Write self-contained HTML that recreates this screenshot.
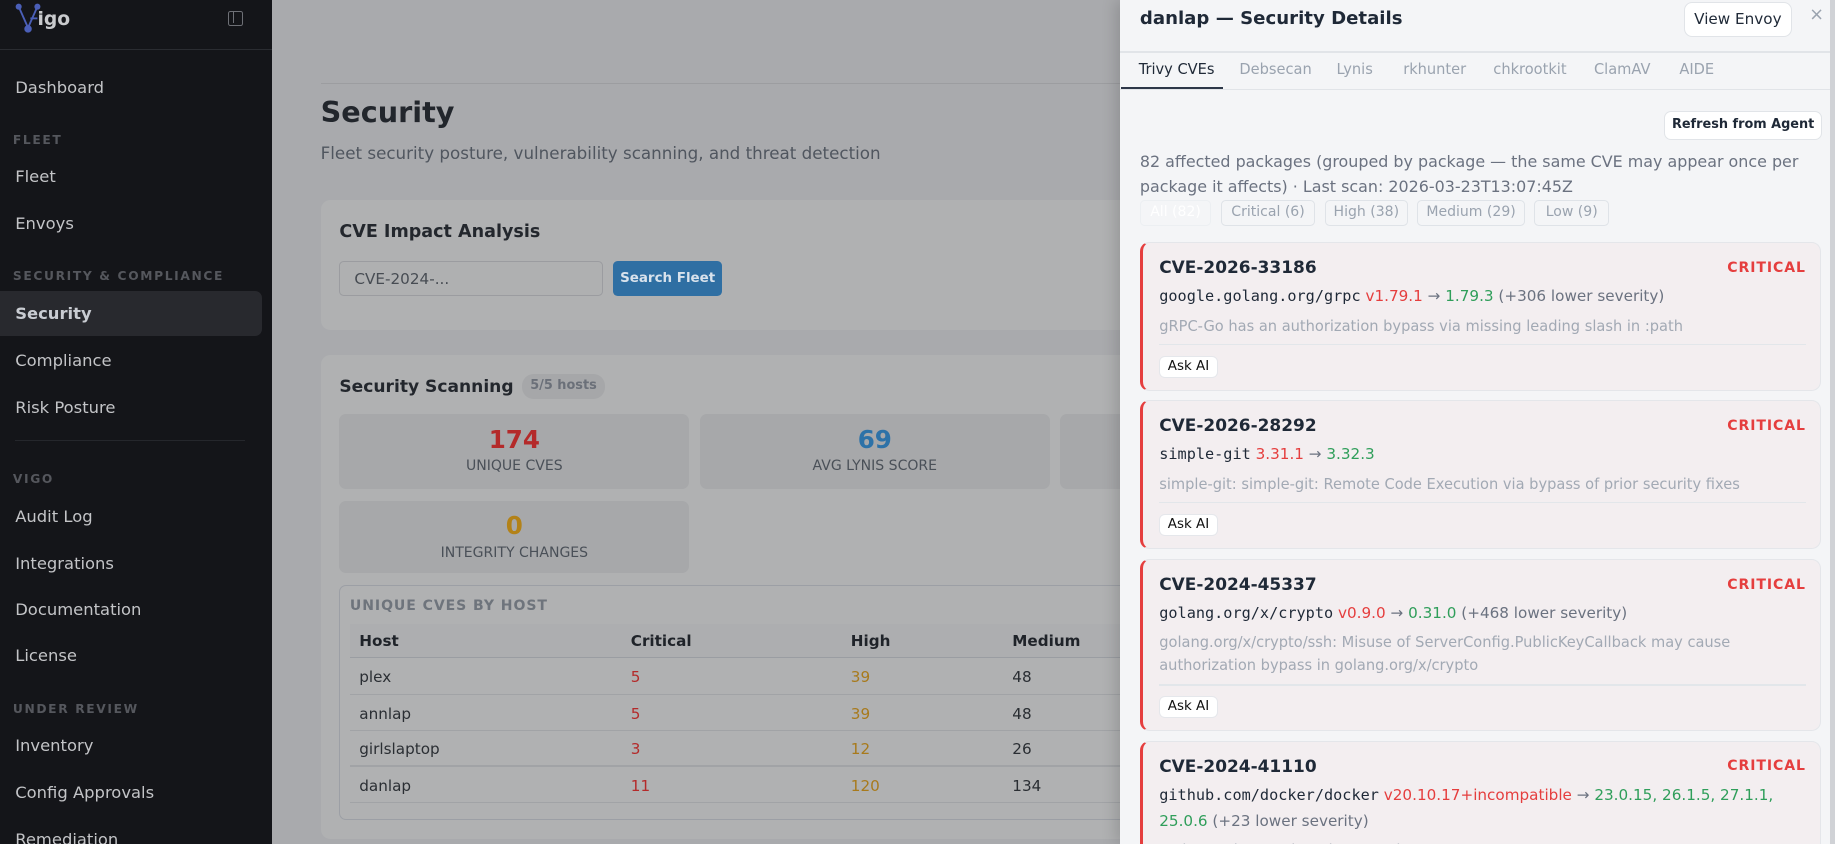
<!DOCTYPE html>
<html><head><meta charset="utf-8"><style>
*{box-sizing:border-box;margin:0;padding:0}
html,body{width:1835px;height:844px;overflow:hidden}
body{font-family:"DejaVu Sans","Liberation Sans",sans-serif;background:#a9aaad;position:relative}
#w{position:absolute;left:0;top:0;width:1568px;height:721px;zoom:1.1703;overflow:hidden}
.sb{position:absolute;left:0;top:0;width:232px;height:721px;background:#141519;color:#c3c4c7}
.sb .it{position:absolute;left:13px;font-size:14px}
.sb .sec{position:absolute;left:11px;font-size:10.5px;font-weight:bold;letter-spacing:1.4px;color:#55575d}
.main{position:absolute;left:232px;top:0;width:725px;height:721px;background:#a9aaad}
.ab{position:absolute}
.card{position:absolute;background:#b0b1b2;border-radius:8px}
.tile{position:absolute;background:#a7a8aa;border-radius:6px;text-align:center}
.tile b{display:block;font-size:21px;margin-top:9px}
.tile span{display:block;font-size:12px;color:#4a5058;margin-top:4px}
.panel{position:absolute;left:957px;top:0;width:611px;height:721px;background:#f4f5f7;box-shadow:-4px 0 12px rgba(0,0,0,.15)}
.btn{position:absolute;background:#fff;border:1px solid #e1e4e8;border-radius:6px;font-size:12.5px;color:#1f2937;text-align:center}
.tab{position:absolute;top:52px;font-size:12.5px;color:#9aa3af}
.chip{position:absolute;top:171px;height:22px;border:1px solid #dfe3e8;border-radius:4px;font-size:12px;color:#9aa3af;text-align:center;line-height:20px}
.cv{position:absolute;left:974px;width:582px;background:#f3eef0;border:1px solid #e4e6ea;border-left:3px solid #e53e3e;border-radius:8px}
.cv .id{position:absolute;left:14px;top:12px;font-size:14.5px;font-weight:bold;color:#1f2937}
.cv .crit{position:absolute;right:12px;top:14px;font-size:12px;font-weight:bold;color:#e53e3e;letter-spacing:.8px}
.cv .pk{position:absolute;left:14px;top:35px;font-size:13px;color:#6b7280;line-height:22px;width:540px}
.mono{font-family:"DejaVu Sans Mono","Liberation Mono",monospace;color:#1f2937}
.r{color:#e53e3e}.g{color:#2f9e5a}
.cv .ds{position:absolute;left:14px;font-size:12.5px;color:#a2a9b4;line-height:20px;width:540px}
.cv .hr{position:absolute;left:14px;right:12px;height:1px;background:#e2e6ea}
.cv .ask{position:absolute;left:14px;width:50px;height:19px;background:#fff;border:1px solid #e5e7eb;border-radius:5px;font-size:11.5px;text-align:center;line-height:17px;color:#111}
.th{position:absolute;top:540px;font-size:13px;font-weight:bold;color:#1f2329}
.td{position:absolute;font-size:13px;color:#2a2e33}
</style></head><body><div id="w">
<div class="sb">
 <svg class="ab" style="left:12px;top:2px" width="24" height="26" viewBox="0 0 24 26"><g stroke="#4b5fb8" stroke-width="1.6" fill="#4b5fb8"><line x1="4" y1="4" x2="12" y2="22"/><line x1="20" y1="4" x2="12" y2="22"/><line x1="14" y1="14" x2="20" y2="14"/><circle cx="4" cy="4" r="1.8"/><circle cx="20" cy="4" r="1.8"/><circle cx="12" cy="23" r="2.4"/></g></svg>
 <div class="ab" style="left:32px;top:8px;font-size:16px;font-weight:bold;color:#c9cacd">igo</div>
 <div class="ab" style="left:195px;top:9px;width:13px;height:13px;border:1.5px solid #6e7076;border-radius:2px"><div style="position:absolute;left:3px;top:0;width:1.5px;height:10px;background:#6e7076"></div></div>
 <div class="ab" style="left:0;top:42px;width:232px;height:1px;background:#2a2c31"></div>
 <div class="it" style="top:67px">Dashboard</div>
 <div class="sec" style="top:114px">FLEET</div>
 <div class="it" style="top:143px">Fleet</div>
 <div class="it" style="top:183px">Envoys</div>
 <div class="sec" style="top:230px">SECURITY &amp; COMPLIANCE</div>
 <div class="ab" style="left:0;top:249px;width:224px;height:38px;background:#28292e;border-radius:0 6px 6px 0"></div>
 <div class="it" style="top:260px;font-weight:bold;color:#c9ccd2">Security</div>
 <div class="it" style="top:300px">Compliance</div>
 <div class="it" style="top:340px">Risk Posture</div>
 <div class="ab" style="left:13px;top:376px;width:196px;height:1px;background:#25272c"></div>
 <div class="sec" style="top:403px">VIGO</div>
 <div class="it" style="top:433px">Audit Log</div>
 <div class="it" style="top:473px">Integrations</div>
 <div class="it" style="top:513px">Documentation</div>
 <div class="it" style="top:552px">License</div>
 <div class="sec" style="top:600px">UNDER REVIEW</div>
 <div class="it" style="top:629px">Inventory</div>
 <div class="it" style="top:669px">Config Approvals</div>
 <div class="it" style="top:709px">Remediation</div>
</div>
<div class="main"></div>
<div class="ab" style="left:274px;top:71px;width:700px;height:1px;background:#9c9da0"></div>
<div class="ab" style="left:274px;top:81px;font-size:24.5px;font-weight:bold;color:#22262c">Security</div>
<div class="ab" style="left:274px;top:122px;font-size:14.3px;color:#50565f">Fleet security posture, vulnerability scanning, and threat detection</div>
<div class="card" style="left:274px;top:171px;width:720px;height:111px"></div>
<div class="ab" style="left:290px;top:190px;font-size:15px;font-weight:bold;color:#23272d">CVE Impact Analysis</div>
<div class="ab" style="left:290px;top:223px;width:225px;height:30px;border:1px solid #9b9ca0;border-radius:4px;background:#afb0b1;font-size:13px;color:#474c53;padding:7px 12px">CVE-2024-...</div>
<div class="ab" style="left:524px;top:223px;width:93px;height:30px;background:#2f6fa3;border-radius:4px;font-size:11.5px;font-weight:bold;color:#d8e2ec;text-align:center;line-height:30px">Search Fleet</div>
<div class="card" style="left:274px;top:303px;width:720px;height:414px"></div>
<div class="ab" style="left:290px;top:322px;font-size:14.6px;font-weight:bold;color:#23272d">Security Scanning</div>
<div class="ab" style="left:446px;top:320px;width:71px;height:21px;background:#a6a7a9;border-radius:10px;font-size:11px;font-weight:bold;color:#6b7079;text-align:center;line-height:21px">5/5 hosts</div>
<div class="tile" style="left:290px;top:354px;width:299px;height:64px"><b style="color:#b42a2a">174</b><span>UNIQUE CVES</span></div>
<div class="tile" style="left:598px;top:354px;width:299px;height:64px"><b style="color:#2d72a8">69</b><span>AVG LYNIS SCORE</span></div>
<div class="tile" style="left:906px;top:354px;width:100px;height:64px"></div>
<div class="tile" style="left:290px;top:428px;width:299px;height:62px"><b style="color:#b38218">0</b><span>INTEGRITY CHANGES</span></div>
<div class="ab" style="left:290px;top:500px;width:700px;height:201px;border:1px solid #9c9fa5;border-radius:6px"></div>
<div class="ab" style="left:299px;top:511px;font-size:12px;font-weight:bold;letter-spacing:.8px;color:#6e747c">UNIQUE CVES BY HOST</div>
<div class="ab" style="left:299px;top:533px;width:680px;height:29px;background:#adaeb0;border-bottom:1px solid #9a9da2"></div>
<div class="th" style="left:307px">Host</div><div class="th" style="left:539px">Critical</div><div class="th" style="left:727px">High</div><div class="th" style="left:865px">Medium</div>
<div class="td" style="left:307px;top:571px">plex</div><div class="td" style="left:539px;top:571px;color:#b42a2a">5</div><div class="td" style="left:727px;top:571px;color:#a87a1c">39</div><div class="td" style="left:865px;top:571px">48</div>
<div class="ab" style="left:299px;top:593px;width:680px;height:1px;background:#a1a3a6"></div>
<div class="td" style="left:307px;top:602px">annlap</div><div class="td" style="left:539px;top:602px;color:#b42a2a">5</div><div class="td" style="left:727px;top:602px;color:#a87a1c">39</div><div class="td" style="left:865px;top:602px">48</div>
<div class="ab" style="left:299px;top:624px;width:680px;height:1px;background:#a1a3a6"></div>
<div class="td" style="left:307px;top:632px">girlslaptop</div><div class="td" style="left:539px;top:632px;color:#b42a2a">3</div><div class="td" style="left:727px;top:632px;color:#a87a1c">12</div><div class="td" style="left:865px;top:632px">26</div>
<div class="ab" style="left:299px;top:654px;width:680px;height:1px;background:#a1a3a6"></div>
<div class="td" style="left:307px;top:664px">danlap</div><div class="td" style="left:539px;top:664px;color:#b42a2a">11</div><div class="td" style="left:727px;top:664px;color:#a87a1c">120</div><div class="td" style="left:865px;top:664px">134</div>
<div class="ab" style="left:299px;top:685px;width:680px;height:1px;background:#a1a3a6"></div>

<div class="panel"></div>
<div class="ab" style="left:974px;top:7px;font-size:15.5px;font-weight:bold;color:#1f2937">danlap — Security Details</div>
<div class="btn" style="left:1439px;top:2px;width:92px;height:30px;line-height:28px;font-size:13px;border-radius:7px">View Envoy</div>
<div class="ab" style="left:1546px;top:4px;font-size:15px;color:#9aa3af">×</div>
<div class="ab" style="left:957px;top:44px;width:611px;height:1px;background:#e1e4e8"></div>
<div class="tab" style="left:973px;color:#1f2937">Trivy CVEs</div>
<div class="tab" style="left:1059px">Debsecan</div>
<div class="tab" style="left:1142px">Lynis</div>
<div class="tab" style="left:1199px">rkhunter</div>
<div class="tab" style="left:1276px">chkrootkit</div>
<div class="tab" style="left:1362px">ClamAV</div>
<div class="tab" style="left:1435px">AIDE</div>
<div class="ab" style="left:957px;top:76px;width:611px;height:1px;background:#e1e4e8"></div>
<div class="ab" style="left:958px;top:74px;width:87px;height:2px;background:#2d3748"></div>
<div class="btn" style="left:1422px;top:95px;width:135px;height:25px;line-height:23px;font-weight:bold;font-size:11px">Refresh from Agent</div>
<div class="ab" style="left:974px;top:127px;width:580px;font-size:13.6px;line-height:22px;color:#6b7280">82 affected packages (grouped by package — the same CVE may appear once per package it affects) · Last scan: 2026-03-23T13:07:45Z</div>
<div class="chip" style="left:974px;width:61px;color:#fff;border-color:#eceff2">All (82)</div>
<div class="chip" style="left:1043px;width:81px">Critical (6)</div>
<div class="chip" style="left:1132px;width:71px">High (38)</div>
<div class="chip" style="left:1211px;width:92px">Medium (29)</div>
<div class="chip" style="left:1311px;width:64px">Low (9)</div>

<div class="cv" style="top:207px;height:127px"><div class="id">CVE-2026-33186</div><div class="crit">CRITICAL</div>
<div class="pk"><span class="mono">google.golang.org/grpc</span> <span class="r">v1.79.1</span> → <span class="g">1.79.3</span> (+306 lower severity)</div>
<div class="ds" style="top:61px">gRPC-Go has an authorization bypass via missing leading slash in :path</div>
<div class="hr" style="top:86px"></div><div class="ask" style="top:96px">Ask AI</div></div>

<div class="cv" style="top:342px;height:127px"><div class="id">CVE-2026-28292</div><div class="crit">CRITICAL</div>
<div class="pk"><span class="mono">simple-git</span> <span class="r">3.31.1</span> → <span class="g">3.32.3</span></div>
<div class="ds" style="top:61px">simple-git: simple-git: Remote Code Execution via bypass of prior security fixes</div>
<div class="hr" style="top:86px"></div><div class="ask" style="top:96px">Ask AI</div></div>

<div class="cv" style="top:478px;height:147px"><div class="id">CVE-2024-45337</div><div class="crit">CRITICAL</div>
<div class="pk"><span class="mono">golang.org/x/crypto</span> <span class="r">v0.9.0</span> → <span class="g">0.31.0</span> (+468 lower severity)</div>
<div class="ds" style="top:60px">golang.org/x/crypto/ssh: Misuse of ServerConfig.PublicKeyCallback may cause authorization bypass in golang.org/x/crypto</div>
<div class="hr" style="top:106px"></div><div class="ask" style="top:116px">Ask AI</div></div>

<div class="cv" style="top:633px;height:120px"><div class="id">CVE-2024-41110</div><div class="crit">CRITICAL</div>
<div class="pk"><span class="mono">github.com/docker/docker</span> <span class="r">v20.10.17+incompatible</span> → <span class="g">23.0.15, 26.1.5, 27.1.1, 25.0.6</span> (+23 lower severity)</div>
<div class="ds" style="top:83px">moby: Authz zero length regression</div></div>
<div class="ab" style="left:1564px;top:0;width:4px;height:721px;background:#d0d2d6"></div>
</div></body></html>
